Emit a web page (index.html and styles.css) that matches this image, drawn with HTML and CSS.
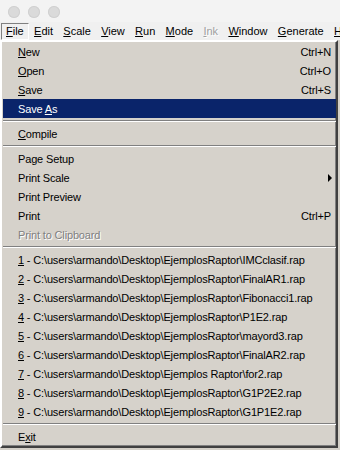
FILE: index.html
```html
<!DOCTYPE html>
<html lang="en">
<head>
    <meta charset="UTF-8">
    <meta name="viewport" content="width=device-width, initial-scale=1.0">
    <title>Raptor - File menu</title>
    <link rel="stylesheet" href="styles.css">
</head>
<body>
    <div class="titlebar">
        <span class="light"></span>
        <span class="light"></span>
        <span class="light"></span>
    </div>

    <nav class="menubar">
        <span class="mi open"><u>F</u>ile</span>
        <span class="mi"><u>E</u>dit</span>
        <span class="mi"><u>S</u>cale</span>
        <span class="mi"><u>V</u>iew</span>
        <span class="mi"><u>R</u>un</span>
        <span class="mi"><u>M</u>ode</span>
        <span class="mi disabled"><u>I</u>nk</span>
        <span class="mi"><u>W</u>indow</span>
        <span class="mi"><u>G</u>enerate</span>
        <span class="mi"><u>H</u>elp</span>
    </nav>

    <div class="menu">
        <div class="item"><span><u>N</u>ew</span><span class="key">Ctrl+N</span></div>
        <div class="item"><span><u>O</u>pen</span><span class="key">Ctrl+O</span></div>
        <div class="item"><span><u>S</u>ave</span><span class="key">Ctrl+S</span></div>
        <div class="item active"><span>Save <u>A</u>s</span></div>
        <div class="sep"></div>
        <div class="item"><span><u>C</u>ompile</span></div>
        <div class="sep"></div>
        <div class="item"><span>Page Setup</span></div>
        <div class="item"><span>Print Scale</span><span class="arrow"></span></div>
        <div class="item"><span>Print Preview</span></div>
        <div class="item"><span>Print</span><span class="key">Ctrl+P</span></div>
        <div class="item disabled"><span>Print to Clipboard</span></div>
        <div class="sep"></div>
        <div class="item"><span><u>1</u> - C:\users\armando\Desktop\EjemplosRaptor\IMCclasif.rap</span></div>
        <div class="item"><span><u>2</u> - C:\users\armando\Desktop\EjemplosRaptor\FinalAR1.rap</span></div>
        <div class="item"><span><u>3</u> - C:\users\armando\Desktop\EjemplosRaptor\Fibonacci1.rap</span></div>
        <div class="item"><span><u>4</u> - C:\users\armando\Desktop\EjemplosRaptor\P1E2.rap</span></div>
        <div class="item"><span><u>5</u> - C:\users\armando\Desktop\EjemplosRaptor\mayord3.rap</span></div>
        <div class="item"><span><u>6</u> - C:\users\armando\Desktop\EjemplosRaptor\FinalAR2.rap</span></div>
        <div class="item"><span><u>7</u> - C:\users\armando\Desktop\Ejemplos Raptor\for2.rap</span></div>
        <div class="item"><span><u>8</u> - C:\users\armando\Desktop\EjemplosRaptor\G1P2E2.rap</span></div>
        <div class="item"><span><u>9</u> - C:\users\armando\Desktop\EjemplosRaptor\G1P1E2.rap</span></div>
        <div class="sep"></div>
        <div class="item"><span>E<u>x</u>it</span></div>
    </div>
</body>
</html>
```

FILE: styles.css
```css
body {
    font-family: 'Liberation Sans', Arial, sans-serif;
    font-size: 11px;
    background-color: #d4d0c8;
    margin: 0;
    padding: 0;
    color: #000;
    width: 340px;
    height: 450px;
    overflow: hidden;
}
.titlebar {
    height: 22px;
    background-color: #f3f3f3;
    display: flex;
    align-items: center;
    gap: 8px;
    padding-left: 8px;
    box-sizing: border-box;
}
.light {
    width: 12px;
    height: 12px;
    border-radius: 50%;
    background-color: #dadada;
    box-shadow: inset 0 0 0 1px #d0d0d0;
    margin-top: 1px;
}
.menubar {
    height: 18px;
    background-color: #f0f0f0;
    display: flex;
    padding: 1px 0 0 1px;
    box-sizing: border-box;
    white-space: nowrap;
    overflow: hidden;
}
.mi {
    height: 17px;
    line-height: 15px;
    padding: 0 4px 0 4px;
    margin-right: 0.3px;
    border: 1px solid transparent;
    box-sizing: border-box;
}
.mi.open {
    border-color: #808080 #fff #fff #808080;
}
.mi.disabled, .item.disabled {
    color: #a0a0a0;
    text-shadow: 1px 1px 0 #fff;
}
.menu {
    width: 338px;
    background-color: #d6d2cb;
    border: 2px solid;
    border-color: #fff #404040 #404040 #fff;
    box-shadow: inset -1px -1px 0 #808080;
    padding: 0 0 0 1px;
    box-sizing: border-box;
    letter-spacing: -0.15px;
}
.item {
    height: 19px;
    display: flex;
    align-items: center;
    justify-content: space-between;
    padding: 0 5px 0 15px;
    white-space: nowrap;
}
.item.active {
    background-color: #0a246a;
    color: #fff;
}
.item.disabled {
    color: #808080;
}
.arrow {
    width: 0;
    height: 0;
    border-left: 4px solid #000;
    border-top: 4px solid transparent;
    border-bottom: 4px solid transparent;
    margin-right: -1px;
}
.sep {
    height: 0;
    border-top: 1px solid #808080;
    border-bottom: 1px solid #fff;
    margin: 2px 0;
}
```
